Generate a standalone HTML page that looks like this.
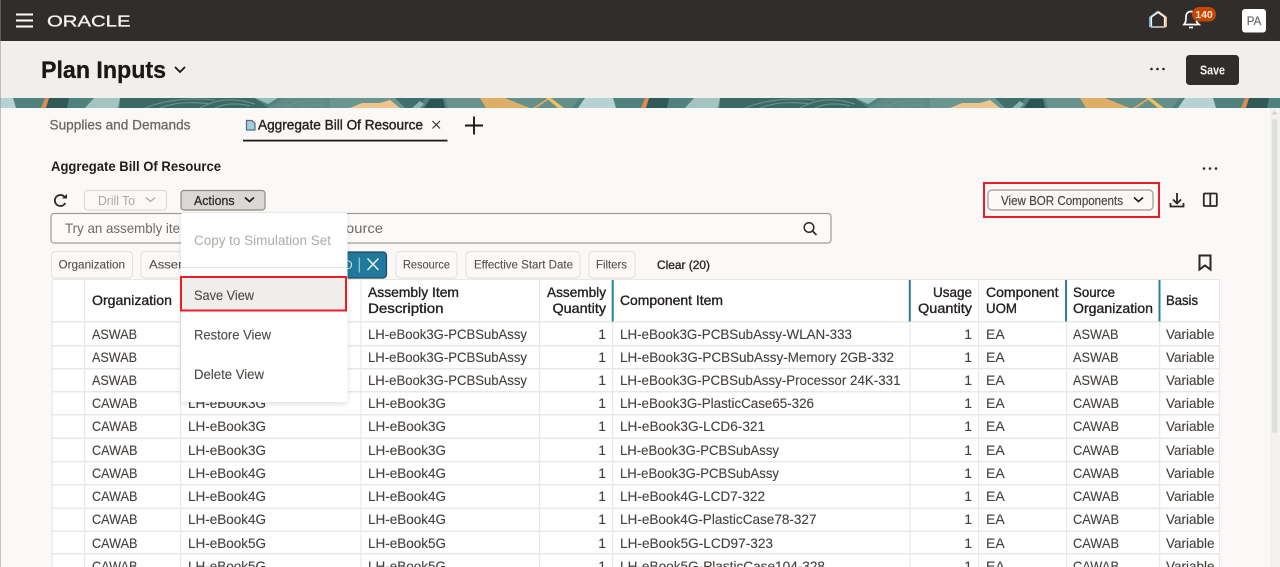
<!DOCTYPE html>
<html lang="en"><head><meta charset="utf-8"><title>Plan Inputs</title>
<style>
html,body{margin:0;padding:0;width:1280px;height:567px;overflow:hidden;background:#fbf9f8}
svg{display:block}
text{font-family:"Liberation Sans",sans-serif;font-size:14px;fill:#45413d;stroke:#45413d;stroke-width:.12}
.h text{fill:#24211f;stroke:#24211f;stroke-width:.35}
.m text{fill:#4c4844;stroke:#4c4844;stroke-width:.1}
.c text{font-size:12px;fill:#55514d;stroke:#55514d;stroke-width:.12}
.i{fill:none;stroke:#2b2826;stroke-width:1.8}
</style></head><body>
<svg xmlns="http://www.w3.org/2000/svg" width="1280" height="567" viewBox="0 0 1280 567">
<defs>
<pattern id="b" x="0" y="98" width="600" height="10" patternUnits="userSpaceOnUse">
<rect width="600" height="10" fill="#4f827c"/>
<path d="M0 0H13L16 10H0Z" fill="#b5d3d3"/>
<path d="M49 0H69L67 10H46Z" fill="#2f5a58"/>
<path d="M45 0H49L46 10H41Z" fill="#e08a52"/>
<path d="M94 0H120L118 10H85Z" fill="#a3c4bf"/>
<path d="M120 0H255L268 10H120Z" fill="#3b6a65"/>
<path d="M255 0H278L268 6Z" fill="#95bfbb"/>
<path d="M268 10L278 4L282 0H330V10Z" fill="#5f8c86"/>
<path d="M145 10Q175-2 215 2 M160 10Q180 2 210 6 M200 10Q225-4 255 6 M215 10Q230 3 250 8 M285 10Q300 0 325 4 M300 10Q310 5 325 8" fill="none" stroke="#6c958f" stroke-width="1"/>
<path d="M330 0H395L408 10H330Z" fill="#6a9690"/>
<path d="M350 10L362 5L380 5L390 2L400 10Z" fill="#f0c48e"/>
<path d="M395 0H425L420 10H405Z" fill="#3f6f6a"/>
<path d="M424 10L430 1H443L445 10Z" fill="#2b5554"/>
<path d="M412 10L420 3L424 6L420 10Z" fill="#8fb3ae"/>
<path d="M445 0H480L486 10H448Z" fill="#6a928c"/>
<path d="M480 0H505L530 10H486Z" fill="#dfae64"/>
<path d="M505 0H580L572 10H530Z" fill="#658f89"/>
<path d="M548 0H551L536 10H533Z" fill="#e9a85d"/>
<path d="M546 0H551L564 10H558Z" fill="#eec260"/>
<path d="M585 0H600V10H578Z" fill="#b5d3d3"/>
</pattern>
</defs>

<rect width="1280" height="567" fill="#fbf9f8"/>
<rect width="1280" height="41" fill="#312d2a"/>
<rect y="41" width="1280" height="57" fill="#f1efed"/>
<rect y="98" width="1280" height="10" fill="url(#b)"/>
<rect x="0" y="0" width="1" height="567" fill="#8f8b86" opacity=".5"/>

<path d="M16 14.5H33M16 20.5H33M16 26.5H33" stroke="#fff" stroke-width="2"/>
<text x="47" y="26.3" textLength="83.5" lengthAdjust="spacingAndGlyphs" style="font-size:15.5px;fill:#f4f3f2;stroke:#f4f3f2;stroke-width:.3">ORACLE</text>

<path d="M1150 27V17.5L1158 11.5" fill="none" stroke="#8cc4ec" stroke-width="1.8"/>
<path d="M1158 11.5L1166 17.5V27" fill="none" stroke="#f2c9a4" stroke-width="1.8"/>
<path d="M1150.500 27H1165.500M1151.500 17L1158 12.500L1164.500 17M1151.500 17V26M1164.500 17V26" fill="none" stroke="#fff" stroke-width="1.200"/>
<path d="M1184 24.5C1186 22 1186 20 1186 17C1186 13.500 1188 11.500 1191 11.500C1194 11.500 1196 13.500 1196 17C1196 20 1196 22 1199 24.500Z" fill="none" stroke="#fff" stroke-width="1.7"/>
<path d="M1189 27.500H1193" stroke="#fff" stroke-width="1.700"/>
<rect x="1192" y="7" width="24" height="14.500" rx="7.200" fill="#c74600"/>
<text x="1204" y="18" text-anchor="middle" style="font-size:10.500px;font-weight:bold;fill:#fbe6d8;stroke:none">140</text>
<rect x="1242" y="9" width="24" height="23.500" rx="3" fill="#fff"/>
<text x="1254" y="25" text-anchor="middle" style="font-size:11.500px;fill:#6d6a67;stroke:#6d6a67;stroke-width:.2">PA</text>

<text x="41" y="78" textLength="125" lengthAdjust="spacingAndGlyphs" style="font-size:24px;font-weight:bold;fill:#1a1816;stroke:#1a1816;stroke-width:.3">Plan Inputs</text>
<path d="M175 67L180 72L185 67" fill="none" stroke="#1a1816" stroke-width="1.800"/>
<g fill="#2b2826"><circle cx="1151.500" cy="69" r="1.300"/><circle cx="1157.500" cy="69" r="1.300"/><circle cx="1163.500" cy="69" r="1.300"/></g>
<rect x="1186" y="55" width="53" height="30" rx="3.500" fill="#312d2a"/>
<text x="1200" y="74.500" textLength="25" lengthAdjust="spacingAndGlyphs" style="font-size:12.500px;font-weight:bold;fill:#f4f3f2;stroke:none">Save</text>

<text x="49.500" y="129.500" textLength="141" lengthAdjust="spacingAndGlyphs" style="fill:#6d6863;stroke:#6d6863;stroke-width:.3">Supplies and Demands</text>
<path d="M246.500 120.500H252L255 123.500V130H246.500Z" fill="#a9cbe0" stroke="#4d6f85" stroke-width="1.200"/>
<text x="258" y="129.500" textLength="165" lengthAdjust="spacingAndGlyphs" style="fill:#26231f;stroke:#26231f;stroke-width:.4">Aggregate Bill Of Resource</text>
<path d="M432.500 121L440 128.500M440 121L432.500 128.500" stroke="#3d3a37" stroke-width="1.200"/>
<rect x="243" y="139.700" width="204.500" height="1.800" fill="#1d1b19"/>
<path d="M465 125.500H483M474 116.500V134.500" stroke="#1a1816" stroke-width="1.900"/>

<text x="51" y="171" textLength="170" lengthAdjust="spacingAndGlyphs" style="font-size:13.500px;font-weight:bold;fill:#1f1c1a;stroke:none">Aggregate Bill Of Resource</text>
<g fill="#2b2826"><circle cx="1204" cy="168.500" r="1.300"/><circle cx="1210" cy="168.500" r="1.300"/><circle cx="1216" cy="168.500" r="1.300"/></g>

<path d="M65 197.500A5.500 5.500 0 1 0 65.300 203" class="i"/>
<path d="M62 198.500H67V194Z" fill="#2b2826"/>
<rect x="84.500" y="190.500" width="82" height="19.500" rx="3" fill="#fbf9f8" stroke="#dddbd7" stroke-width="1.200"/>
<text x="98" y="205" textLength="37" lengthAdjust="spacingAndGlyphs" style="font-size:12.500px;fill:#aaa7a3;stroke:none">Drill To</text>
<path d="M146 197.500L150.500 201.500L155 197.500" fill="none" stroke="#b0adaa" stroke-width="1.400"/>
<rect x="181" y="190.500" width="84" height="19.500" rx="3" fill="#dad8d4" stroke="#8f8b85" stroke-width="1.200"/>
<text x="194" y="205" textLength="40.500" lengthAdjust="spacingAndGlyphs" style="font-size:12.500px;fill:#2d2a27;stroke:#2d2a27;stroke-width:.25">Actions</text>
<path d="M245 197.500L249.500 201.500L254 197.500" fill="none" stroke="#1f1c1a" stroke-width="1.700"/>

<rect x="988" y="190" width="165" height="20" rx="4" fill="#fbf9f8" stroke="#aaa7a2" stroke-width="1.400"/>
<text x="1001" y="205" textLength="122" lengthAdjust="spacingAndGlyphs" style="font-size:12.500px;fill:#4c4844;stroke:#4c4844;stroke-width:.2">View BOR Components</text>
<path d="M1134 197.500L1138.500 201.500L1143 197.500" fill="none" stroke="#1f1c1a" stroke-width="1.700"/>
<rect x="984" y="183" width="175" height="34" fill="none" stroke="#ee1c25" stroke-width="2"/>

<path d="M1177 193V203M1173 199.500L1177 203.500L1181 199.500M1170.500 203V206.500H1183.500V203" class="i"/>
<rect x="1203.800" y="193.500" width="13" height="12.500" rx="1" class="i"/>
<path d="M1210.300 193.500V206" class="i"/>

<rect x="51" y="213.500" width="780" height="29.500" rx="3" fill="#fcfbfa" stroke="#a09c97" stroke-width="1.200"/>
<text x="65" y="233" textLength="115" lengthAdjust="spacingAndGlyphs" style="fill:#6e6a66;stroke:none">Try an assembly ite</text>
<text x="346" y="233" textLength="37" lengthAdjust="spacingAndGlyphs" style="fill:#6e6a66;stroke:none">ource</text>
<circle cx="809" cy="227.500" r="4.800" class="i" style="stroke-width:1.500"/>
<path d="M812.500 231L816.500 235" class="i" style="stroke-width:1.600"/>

<g fill="#fbfaf8" stroke="#e6e4e0" stroke-width="1.200">
<rect x="51.500" y="251.500" width="81" height="26.500" rx="4"/>
<rect x="141" y="251.500" width="60" height="26.500" rx="4"/>
<rect x="396" y="251.500" width="61" height="26.500" rx="4"/>
<rect x="466" y="251.500" width="114" height="26.500" rx="4"/>
<rect x="589" y="251.500" width="46" height="26.500" rx="4"/>
</g>
<rect x="320" y="252" width="66.500" height="26" rx="3.500" fill="#21799b" stroke="#1f4a5b" stroke-width="1.200"/>
<text x="344" y="269" style="font-size:12px;fill:#cfe3ec;stroke:none">D</text>
<path d="M359.300 257.500V272.500" stroke="#9fcadb" stroke-width="1.200"/>
<path d="M367.500 258.500L378.500 270M378.500 258.500L367.500 270" stroke="#e8f2f6" stroke-width="1.500"/>
<g class="c">
<text x="58.500" y="268.500" textLength="66.500" lengthAdjust="spacingAndGlyphs">Organization</text>
<text x="149" y="268.500" textLength="40" lengthAdjust="spacingAndGlyphs">Assem</text>
<text x="403" y="268.500" textLength="47" lengthAdjust="spacingAndGlyphs">Resource</text>
<text x="474" y="268.500" textLength="99" lengthAdjust="spacingAndGlyphs">Effective Start Date</text>
<text x="596" y="268.500" textLength="31" lengthAdjust="spacingAndGlyphs">Filters</text>
</g>
<text x="657" y="269" textLength="53" lengthAdjust="spacingAndGlyphs" style="font-size:12px;fill:#2a2724;stroke:#2a2724;stroke-width:.35">Clear (20)</text>
<path d="M1199.500 255.500H1210.500V269.500L1205 265.500L1199.500 269.500Z" class="i" style="stroke-width:2"/>

<rect x="52" y="279" width="1167.500" height="288" fill="#fff"/>
<g fill="#e9e8e6">
<rect x="52" y="279" width="1167.500" height="1"/>
<rect x="52" y="321" width="1167.500" height="1.500"/>
<rect x="52" y="345" width="1167.500" height="1.500"/>
<rect x="52" y="368" width="1167.500" height="1.500"/>
<rect x="52" y="391" width="1167.500" height="1.500"/>
<rect x="52" y="414" width="1167.500" height="1.500"/>
<rect x="52" y="437.500" width="1167.500" height="1.500"/>
<rect x="52" y="461" width="1167.500" height="1.500"/>
<rect x="52" y="484" width="1167.500" height="1.500"/>
<rect x="52" y="507.500" width="1167.500" height="1.500"/>
<rect x="52" y="530.500" width="1167.500" height="1.500"/>
<rect x="52" y="553" width="1167.500" height="1.500"/>
<rect x="51.500" y="279" width="1.200" height="288"/>
<rect x="84" y="279" width="1.200" height="288"/>
<rect x="180" y="279" width="1.200" height="288"/>
<rect x="360.500" y="279" width="1.200" height="288"/>
<rect x="539" y="279" width="1.200" height="288"/>
<rect x="612" y="279" width="1.200" height="288"/>
<rect x="909.500" y="279" width="1.200" height="288"/>
<rect x="978" y="279" width="1.200" height="288"/>
<rect x="1066" y="279" width="1.200" height="288"/>
<rect x="1159" y="279" width="1.200" height="288"/>
<rect x="1219" y="279" width="1.200" height="288"/>
</g>
<g fill="#2a7fa0">
<rect x="611.700" y="280" width="2" height="41.500"/>
<rect x="908.800" y="280" width="2" height="41.500"/>
<rect x="1065" y="280" width="2" height="41.500"/>
<rect x="1158.500" y="280" width="2" height="41.500"/>
</g>

<g class="h">
<text x="92" y="305" textLength="80" lengthAdjust="spacingAndGlyphs">Organization</text>
<text x="368" y="297" textLength="91" lengthAdjust="spacingAndGlyphs">Assembly Item</text>
<text x="368" y="313" textLength="75.500" lengthAdjust="spacingAndGlyphs">Description</text>
<text x="547" y="297" textLength="59" lengthAdjust="spacingAndGlyphs">Assembly</text>
<text x="552.500" y="313" textLength="53.500" lengthAdjust="spacingAndGlyphs">Quantity</text>
<text x="620" y="305" textLength="103" lengthAdjust="spacingAndGlyphs">Component Item</text>
<text x="933" y="297" textLength="39" lengthAdjust="spacingAndGlyphs">Usage</text>
<text x="918" y="313" textLength="54" lengthAdjust="spacingAndGlyphs">Quantity</text>
<text x="986" y="297" textLength="72.500" lengthAdjust="spacingAndGlyphs">Component</text>
<text x="986" y="313" textLength="31" lengthAdjust="spacingAndGlyphs">UOM</text>
<text x="1073" y="297" textLength="42" lengthAdjust="spacingAndGlyphs">Source</text>
<text x="1073" y="313" textLength="80" lengthAdjust="spacingAndGlyphs">Organization</text>
<text x="1166" y="305" textLength="32" lengthAdjust="spacingAndGlyphs">Basis</text>
</g>

<g>
<text x="92" y="339" textLength="45" lengthAdjust="spacingAndGlyphs">ASWAB</text>
<text x="92" y="362" textLength="45" lengthAdjust="spacingAndGlyphs">ASWAB</text>
<text x="92" y="385" textLength="45" lengthAdjust="spacingAndGlyphs">ASWAB</text>
<text x="92" y="408" textLength="45.500" lengthAdjust="spacingAndGlyphs">CAWAB</text>
<text x="92" y="431" textLength="45.500" lengthAdjust="spacingAndGlyphs">CAWAB</text>
<text x="92" y="455" textLength="45.500" lengthAdjust="spacingAndGlyphs">CAWAB</text>
<text x="92" y="478" textLength="45.500" lengthAdjust="spacingAndGlyphs">CAWAB</text>
<text x="92" y="501" textLength="45.500" lengthAdjust="spacingAndGlyphs">CAWAB</text>
<text x="92" y="524" textLength="45.500" lengthAdjust="spacingAndGlyphs">CAWAB</text>
<text x="92" y="548" textLength="45.500" lengthAdjust="spacingAndGlyphs">CAWAB</text>
<text x="92" y="571" textLength="45.500" lengthAdjust="spacingAndGlyphs">CAWAB</text>

<text x="188" y="408" textLength="78" lengthAdjust="spacingAndGlyphs">LH-eBook3G</text>
<text x="188" y="431" textLength="78" lengthAdjust="spacingAndGlyphs">LH-eBook3G</text>
<text x="188" y="455" textLength="78" lengthAdjust="spacingAndGlyphs">LH-eBook3G</text>
<text x="188" y="478" textLength="78" lengthAdjust="spacingAndGlyphs">LH-eBook4G</text>
<text x="188" y="501" textLength="78" lengthAdjust="spacingAndGlyphs">LH-eBook4G</text>
<text x="188" y="524" textLength="78" lengthAdjust="spacingAndGlyphs">LH-eBook4G</text>
<text x="188" y="548" textLength="78" lengthAdjust="spacingAndGlyphs">LH-eBook5G</text>
<text x="188" y="571" textLength="78" lengthAdjust="spacingAndGlyphs">LH-eBook5G</text>

<text x="368" y="339" textLength="159" lengthAdjust="spacingAndGlyphs">LH-eBook3G-PCBSubAssy</text>
<text x="368" y="362" textLength="159" lengthAdjust="spacingAndGlyphs">LH-eBook3G-PCBSubAssy</text>
<text x="368" y="385" textLength="159" lengthAdjust="spacingAndGlyphs">LH-eBook3G-PCBSubAssy</text>
<text x="368" y="408" textLength="78" lengthAdjust="spacingAndGlyphs">LH-eBook3G</text>
<text x="368" y="431" textLength="78" lengthAdjust="spacingAndGlyphs">LH-eBook3G</text>
<text x="368" y="455" textLength="78" lengthAdjust="spacingAndGlyphs">LH-eBook3G</text>
<text x="368" y="478" textLength="78" lengthAdjust="spacingAndGlyphs">LH-eBook4G</text>
<text x="368" y="501" textLength="78" lengthAdjust="spacingAndGlyphs">LH-eBook4G</text>
<text x="368" y="524" textLength="78" lengthAdjust="spacingAndGlyphs">LH-eBook4G</text>
<text x="368" y="548" textLength="78" lengthAdjust="spacingAndGlyphs">LH-eBook5G</text>
<text x="368" y="571" textLength="78" lengthAdjust="spacingAndGlyphs">LH-eBook5G</text>

<text x="620" y="339" textLength="232" lengthAdjust="spacingAndGlyphs">LH-eBook3G-PCBSubAssy-WLAN-333</text>
<text x="620" y="362" textLength="274" lengthAdjust="spacingAndGlyphs">LH-eBook3G-PCBSubAssy-Memory 2GB-332</text>
<text x="620" y="385" textLength="280.500" lengthAdjust="spacingAndGlyphs">LH-eBook3G-PCBSubAssy-Processor 24K-331</text>
<text x="620" y="408" textLength="194" lengthAdjust="spacingAndGlyphs">LH-eBook3G-PlasticCase65-326</text>
<text x="620" y="431" textLength="145" lengthAdjust="spacingAndGlyphs">LH-eBook3G-LCD6-321</text>
<text x="620" y="455" textLength="159" lengthAdjust="spacingAndGlyphs">LH-eBook3G-PCBSubAssy</text>
<text x="620" y="478" textLength="159" lengthAdjust="spacingAndGlyphs">LH-eBook3G-PCBSubAssy</text>
<text x="620" y="501" textLength="145" lengthAdjust="spacingAndGlyphs">LH-eBook4G-LCD7-322</text>
<text x="620" y="524" textLength="196.500" lengthAdjust="spacingAndGlyphs">LH-eBook4G-PlasticCase78-327</text>
<text x="620" y="548" textLength="153" lengthAdjust="spacingAndGlyphs">LH-eBook5G-LCD97-323</text>
<text x="620" y="571" textLength="205" lengthAdjust="spacingAndGlyphs">LH-eBook5G-PlasticCase104-328</text>
</g>
<g text-anchor="end">
<text x="606" y="339">1</text><text x="606" y="362">1</text><text x="606" y="385">1</text><text x="606" y="408">1</text><text x="606" y="431">1</text><text x="606" y="455">1</text><text x="606" y="478">1</text><text x="606" y="501">1</text><text x="606" y="524">1</text><text x="606" y="548">1</text><text x="606" y="571">1</text>
<text x="972" y="339">1</text><text x="972" y="362">1</text><text x="972" y="385">1</text><text x="972" y="408">1</text><text x="972" y="431">1</text><text x="972" y="455">1</text><text x="972" y="478">1</text><text x="972" y="501">1</text><text x="972" y="524">1</text><text x="972" y="548">1</text><text x="972" y="571">1</text>
</g>
<g>
<text x="986" y="339">EA</text><text x="986" y="362">EA</text><text x="986" y="385">EA</text><text x="986" y="408">EA</text><text x="986" y="431">EA</text><text x="986" y="455">EA</text><text x="986" y="478">EA</text><text x="986" y="501">EA</text><text x="986" y="524">EA</text><text x="986" y="548">EA</text><text x="986" y="571">EA</text>

<text x="1073" y="339" textLength="45.500" lengthAdjust="spacingAndGlyphs">ASWAB</text>
<text x="1073" y="362" textLength="45.500" lengthAdjust="spacingAndGlyphs">ASWAB</text>
<text x="1073" y="385" textLength="45.500" lengthAdjust="spacingAndGlyphs">ASWAB</text>
<text x="1073" y="408" textLength="46" lengthAdjust="spacingAndGlyphs">CAWAB</text>
<text x="1073" y="431" textLength="46" lengthAdjust="spacingAndGlyphs">CAWAB</text>
<text x="1073" y="455" textLength="46" lengthAdjust="spacingAndGlyphs">CAWAB</text>
<text x="1073" y="478" textLength="46" lengthAdjust="spacingAndGlyphs">CAWAB</text>
<text x="1073" y="501" textLength="46" lengthAdjust="spacingAndGlyphs">CAWAB</text>
<text x="1073" y="524" textLength="46" lengthAdjust="spacingAndGlyphs">CAWAB</text>
<text x="1073" y="548" textLength="46" lengthAdjust="spacingAndGlyphs">CAWAB</text>
<text x="1073" y="571" textLength="46" lengthAdjust="spacingAndGlyphs">CAWAB</text>

<text x="1166" y="339" textLength="48.500" lengthAdjust="spacingAndGlyphs">Variable</text>
<text x="1166" y="362" textLength="48.500" lengthAdjust="spacingAndGlyphs">Variable</text>
<text x="1166" y="385" textLength="48.500" lengthAdjust="spacingAndGlyphs">Variable</text>
<text x="1166" y="408" textLength="48.500" lengthAdjust="spacingAndGlyphs">Variable</text>
<text x="1166" y="431" textLength="48.500" lengthAdjust="spacingAndGlyphs">Variable</text>
<text x="1166" y="455" textLength="48.500" lengthAdjust="spacingAndGlyphs">Variable</text>
<text x="1166" y="478" textLength="48.500" lengthAdjust="spacingAndGlyphs">Variable</text>
<text x="1166" y="501" textLength="48.500" lengthAdjust="spacingAndGlyphs">Variable</text>
<text x="1166" y="524" textLength="48.500" lengthAdjust="spacingAndGlyphs">Variable</text>
<text x="1166" y="548" textLength="48.500" lengthAdjust="spacingAndGlyphs">Variable</text>
<text x="1166" y="571" textLength="48.500" lengthAdjust="spacingAndGlyphs">Variable</text>
</g>

<!-- Actions menu -->
<rect x="181" y="213" width="166.500" height="189" rx="2" fill="#000" opacity=".12" transform="translate(0 2)" style="filter:blur(3px)"/>
<rect x="181" y="213" width="166.500" height="189" rx="2" fill="#fff"/>
<text x="194" y="245" textLength="137" lengthAdjust="spacingAndGlyphs" style="fill:#aeaba7;stroke:none;font-size:13.500px">Copy to Simulation Set</text>
<rect x="181" y="267" width="166.500" height="1" fill="#e6e4e1"/>
<rect x="181" y="277" width="165" height="34" fill="#efeeec"/>
<rect x="181" y="277" width="165" height="33.500" fill="none" stroke="#ee1c25" stroke-width="2"/>
<g class="m">
<text x="194" y="300" textLength="60" lengthAdjust="spacingAndGlyphs" style="font-size:13.500px">Save View</text>
<text x="194" y="339.500" textLength="77" lengthAdjust="spacingAndGlyphs" style="font-size:13.500px">Restore View</text>
<text x="194" y="379" textLength="70" lengthAdjust="spacingAndGlyphs" style="font-size:13.500px">Delete View</text>
</g>

<!-- Scrollbar -->
<rect x="1270" y="108" width="10" height="459" fill="#f3f2f0"/>
<path d="M1274.500 110.500L1277.500 114.500H1271.500Z" fill="#d4d3d1"/>
<rect x="1272" y="119" width="5.500" height="314" rx="2.500" fill="#dededc"/>
</svg>
</body></html>
